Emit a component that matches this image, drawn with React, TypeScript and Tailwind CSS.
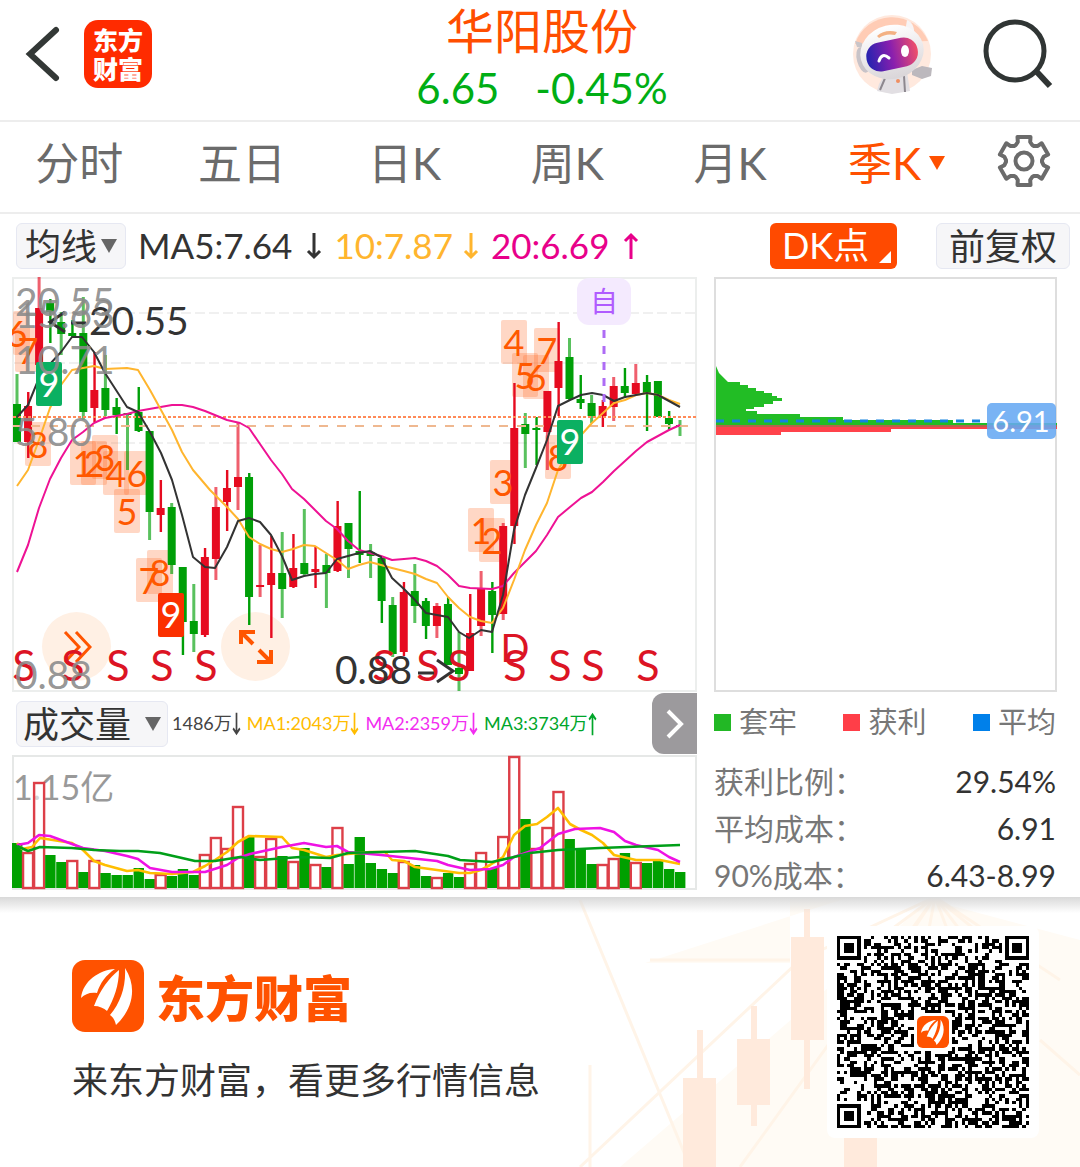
import React from "react";

const LATIN = "font-['Lato','Noto_Sans_CJK_SC',sans-serif]";
const FIRST_X = 17;
const STEP = 11.05;
const xAt = (i: number) => FIRST_X + i * STEP;

type Candle = ["r" | "g", number, number, number, number];

// direction, wick top, wick bottom, body top, body bottom
const CANDLES: Candle[] = [
  ["g", 374, 442, 404, 442], ["r", 392, 458, 406, 442], ["r", 277, 400, 308, 365],
  ["g", 299, 343, 303, 312], ["g", 312, 355, 322, 334], ["g", 320, 338, 333, 336],
  ["g", 297, 420, 333, 412], ["r", 352, 422, 390, 408], ["g", 355, 416, 388, 410],
  ["g", 398, 434, 407, 415], ["g", 413, 470, 413, 415], ["g", 387, 432, 412, 431],
  ["g", 431, 540, 431, 512], ["r", 480, 532, 508, 515], ["g", 503, 574, 507, 565],
  ["g", 567, 655, 567, 622], ["g", 584, 652, 621, 634], ["r", 548, 637, 557, 635],
  ["r", 487, 580, 507, 559], ["r", 470, 531, 488, 502], ["r", 422, 510, 477, 487],
  ["g", 473, 625, 477, 597], ["r", 545, 597, 585, 587], ["r", 536, 638, 573, 585],
  ["g", 532, 618, 573, 589], ["r", 534, 588, 568, 587], ["g", 509, 575, 563, 574],
  ["r", 547, 588, 569, 572], ["g", 554, 608, 565, 573], ["r", 501, 572, 526, 571],
  ["g", 523, 578, 523, 549], ["g", 491, 563, 551, 555], ["g", 544, 578, 552, 556],
  ["g", 558, 623, 558, 601], ["g", 597, 657, 605, 654], ["r", 582, 656, 592, 652],
  ["g", 564, 623, 591, 606], ["g", 598, 639, 601, 626], ["r", 603, 638, 606, 626],
  ["g", 597, 665, 604, 665], ["g", 632, 691, 668, 674], ["r", 594, 671, 633, 671],
  ["r", 571, 636, 588, 626], ["g", 582, 653, 591, 615], ["r", 523, 620, 526, 614],
  ["r", 383, 544, 428, 526], ["g", 413, 468, 424, 434], ["g", 417, 465, 428, 430],
  ["r", 391, 470, 391, 432], ["r", 322, 416, 361, 388], ["g", 338, 400, 357, 399],
  ["g", 375, 409, 399, 403], ["g", 395, 423, 403, 416], ["r", 400, 427, 406, 416],
  ["r", 377, 421, 386, 407], ["g", 368, 398, 386, 393], ["r", 364, 393, 383, 394],
  ["g", 375, 431, 382, 393], ["g", 381, 417, 381, 417], ["g", 411, 430, 418, 424],
  ["g", 420, 436, 425, 427],
];

const VOLUME_TOPS = [
  843, 852, 782, 855, 862, 860, 872, 860, 873, 875, 875, 868, 879, 874, 876, 869, 875, 854, 837, 848, 806,
  837, 856, 838, 856, 861, 848, 864, 867, 827, 864, 837, 863, 869, 873, 861, 865, 876, 877, 873, 877, 863,
  852, 868, 836, 756, 819, 848, 827, 791, 839, 849, 864, 864, 858, 853, 862, 863, 861, 869, 872,
];
const HOLLOW_DOWN = [5, 47];

const MA5 =
  "17,417 28,405 39,378 50,364 61,352 72,337 82,337 94,352 105,373 127,407 138,412 150,432 161,453 172,480 182,515 193,557 205,567 215,568 227,547 238,521 249,518 260,522 271,535 282,556 292,580 304,576 315,574 326,573 337,559 348,556 359,553 370,551 381,557 392,578 404,589 415,600 426,613 437,615 448,617 459,632 469,638 481,630 492,632 503,595 514,530 525,495 536,468 547,440 558,406 570,400 581,395 592,393 603,395 614,401 625,397 636,395 647,393 658,395 669,401 680,407";
const MA10 =
  "17,486 28,470 39,440 50,408 61,385 72,370 94,366 105,369 127,368 138,370 150,390 161,410 172,430 182,452 193,470 210,490 227,507 238,519 249,537 260,544 271,549 282,552 293,549 304,545 315,546 326,553 337,560 348,569 359,565 370,562 381,565 392,568 404,571 415,574 426,579 437,583 448,597 459,608 470,617 481,621 492,623 503,608 514,580 525,550 536,525 547,503 558,470 570,450 583,433 592,423 603,413 614,403 625,400 636,395 647,393 658,395 669,400 680,404";
const MA20 =
  "17,572 28,545 39,508 50,479 61,458 72,440 83,432 94,423 105,418 127,414 138,411 155,408 172,405 182,405 193,407 205,411 227,420 240,423 249,428 260,444 271,460 282,474 292,489 304,499 315,510 326,521 337,529 348,541 359,550 370,553 381,556 392,560 404,559 415,558 426,561 437,566 448,575 459,586 470,588 492,589 503,586 514,573 525,562 536,551 547,535 558,517 570,507 581,498 592,492 603,482 614,471 625,461 636,451 647,442 658,436 669,430 680,425";

const V1 =
  "17,843 22,849 32,847 40,838 72,843 83,850 94,861 105,865 127,871 138,870 150,873 172,874 193,872 205,866 215,860 227,852 238,842 249,836 282,837 292,848 304,850 326,857 337,855 370,852 385,852 392,860 404,861 415,867 437,870 459,873 470,873 481,870 490,865 503,857 514,835 525,826 537,824 547,817 558,808 570,824 581,830 592,835 603,843 614,855 636,860 660,860 680,864";
const V2 =
  "17,845 28,843 39,835 50,836 83,848 105,851 127,856 138,859 150,868 172,872 205,872 227,865 238,858 250,854 282,847 304,843 326,847 337,846 348,852 381,855 400,857 437,861 448,865 470,870 490,869 503,865 514,857 540,848 558,834 575,829 600,828 614,832 625,841 636,845 658,850 669,857 680,862";
const V3 =
  "17,846 28,851 40,847 72,848 94,850 120,851 138,851 160,853 182,858 195,861 215,861 240,857 260,860 300,857 330,858 348,853 380,852 415,851 448,856 460,860 492,862 514,857 530,853 558,850 600,848 680,845";

// label, left, top
const COUNTS: [string, number, number][] = [
  ["6", 4, 311], ["7", 15, 328], ["8", 25, 422], ["1", 70, 441], ["2", 81, 441], ["3", 92, 435],
  ["4", 103, 451], ["6", 124, 451], ["5", 114, 489], ["7", 136, 558], ["8", 147, 550],
  ["1", 468, 508], ["2", 479, 518], ["3", 490, 460], ["4", 501, 320], ["5", 512, 353],
  ["6", 523, 355], ["7", 534, 328], ["8", 545, 435],
];
const NINES: [number, number, string][] = [
  [36, 362, "#0bb062"], [557, 420, "#0bb062"], [158, 593, "#fb3000"],
];
const SIGNALS = [24, 73, 118, 162, 206, 384, 428, 459, 515, 560, 593, 648];

function Logo({ className }: { className: string }) {
  return (
    <svg viewBox="0 0 72 72" className={className} aria-hidden="true">
      <rect width="72" height="72" rx="13" fill="#ff5200" />
      <g fill="#fff">
        <path d="M43 9C27 10 11 21 9 38C13 34 18 32 25 33C28 23 34 15 43 9Z" />
        <path d="M47 10C37 18 28 30 22 46C27 46 32 48 35 51C42 39 47 25 47 10Z" />
        <path d="M53 8C54 26 49 42 38 55C42 58 43 61 44 65C60 50 66 28 53 8Z" />
      </g>
    </svg>
  );
}

function Robot() {
  return (
    <svg viewBox="0 0 80 80" className="size-20" aria-hidden="true">
      <defs>
        <linearGradient id="visor" x1="0" x2="1">
          <stop offset="0" stopColor="#2323b0" />
          <stop offset=".5" stopColor="#8a1fae" />
          <stop offset="1" stopColor="#f0506a" />
        </linearGradient>
        <linearGradient id="shell" x1="0" y1="0" x2="0" y2="1">
          <stop offset="0" stopColor="#ffffff" />
          <stop offset="1" stopColor="#d9d5d8" />
        </linearGradient>
      </defs>
      <circle cx="40" cy="40" r="39" fill="#ffe9de" />
      <path d="M3 30A39 39 0 0 1 76 27" fill="#ffccb5" />
      <path d="M55 6C61 8 64 16 61 26L53 18Z" fill="#f7f4f5" />
      <path d="M33 60L27 70L25 77L40 80L58 77L55 58Z" fill="#e2dfe3" />
      <path d="M34 62L28 76M52 62L53 78" stroke="#8d888f" strokeWidth="2" />
      <circle cx="46" cy="67" r="2" fill="#ef8f62" />
      <path d="M60 56L70 52L80 54L79 62L70 65L60 61Z" fill="#bcb8bd" />
      <ellipse cx="11" cy="46" rx="6" ry="13" fill="#c8c3c8" transform="rotate(-15 11 46)" />
      <path d="M3 27L10 29L11 34L5 33Z" fill="#c9c5c9" />
      <ellipse cx="40" cy="38" rx="32" ry="27" fill="url(#shell)" transform="rotate(-14 40 38)" />
      <path d="M25 22Q33 15 45 18L43 21Q34 19 27 24Z" fill="#f3b183" />
      <rect x="14" y="26" width="52" height="29" rx="14" fill="url(#visor)" transform="rotate(-12 40 40)" />
      <path d="M27 47Q30 38 37 44" stroke="#fff" strokeWidth="3" fill="none" strokeLinecap="round" />
      <ellipse cx="53" cy="37" rx="4" ry="6" fill="#fff" />
    </svg>
  );
}

function Gear() {
  const pts: string[] = [];
  for (let k = 0; k < 6; k++) {
    const spots: [number, number][] = [[-27, 18], [-18, 20], [-15, 25], [15, 25], [18, 20], [27, 18]];
    for (const [da, r] of spots) {
      const a = ((-90 + k * 60 + da) * Math.PI) / 180;
      pts.push(`${(30 + r * Math.cos(a)).toFixed(1)},${(30 + r * Math.sin(a)).toFixed(1)}`);
    }
  }
  return (
    <svg viewBox="0 0 60 60" className="size-[60px]" fill="none" stroke="#6b6b6b" strokeWidth="4" strokeLinejoin="round" aria-hidden="true">
      <polygon points={pts.join(" ")} />
      <circle cx="30" cy="30" r="8.5" />
    </svg>
  );
}

function Arrow({ up, small }: { up?: boolean; small?: boolean }) {
  return (
    <svg viewBox="0 0 16 28" className={small ? "h-6 w-[9px] shrink-0" : "h-7 w-4 shrink-0"} preserveAspectRatio="none" fill="none" stroke="currentColor" strokeWidth="3" aria-label={up ? "上升" : "下降"}>
      <path d={up ? "M8 27V3M2 9L8 3L14 9" : "M8 1V25M2 19L8 25L14 19"} />
    </svg>
  );
}

function Caret({ className }: { className: string }) {
  return (
    <svg viewBox="0 0 16 14" className={className} fill="currentColor" aria-hidden="true">
      <path d="M0 0H16L8 14Z" />
    </svg>
  );
}

function Header() {
  return (
    <header className="grid h-[122px] grid-cols-[1fr_auto_1fr] items-center border-b-2 border-[#ededed]">
      <div className="flex items-center gap-4 pb-3 pl-6">
        <button type="button" aria-label="返回" className="w-11">
          <svg viewBox="0 0 44 60" className="h-[60px] w-11" fill="none" stroke="#333836" strokeWidth="6" strokeLinecap="round" aria-hidden="true">
            <path d="M32 6L6 30L32 54" />
          </svg>
        </button>
        <a href="#home" className="grid size-[68px] place-content-center rounded-[14px] bg-[#ff2b00] text-center font-['Noto_Sans_CJK_SC',sans-serif] text-[25px] leading-[29px] font-black text-white">
          <span>东方</span>
          <span>财富</span>
        </a>
      </div>
      <div className="self-start pl-1 text-center">
        <h1 className="font-['Noto_Sans_CJK_SC',sans-serif] text-[48px] leading-[56px] text-[#ff4e00]">华阳股份</h1>
        <p className="flex justify-center gap-9 text-[42px] leading-[64px] text-[#00ae14]">
          <span>6.65</span>
          <span>-0.45%</span>
        </p>
      </div>
      <div className="flex items-center justify-end gap-12 pr-6 pb-3">
        <button type="button" aria-label="智能助手"><Robot /></button>
        <button type="button" aria-label="搜索">
          <svg viewBox="0 0 76 76" className="size-[76px]" fill="none" stroke="#303534" strokeWidth="5" aria-hidden="true">
            <circle cx="35" cy="35" r="29" />
            <path d="M56 55L70 70" strokeWidth="6" />
          </svg>
        </button>
      </div>
    </header>
  );
}

function Tabs() {
  return (
    <nav className="flex h-[92px] items-center border-b-2 border-[#ededed] text-[44px] text-[#6b6b6b]">
      {["分时", "五日", "日K", "周K", "月K"].map((t) => (
        <button type="button" key={t} className="flex-1 pr-1 pb-2 leading-[60px]">{t}</button>
      ))}
      <button type="button" className="flex flex-1 items-center justify-center gap-2 pb-2 pl-1 leading-[60px] text-[#ff5000]">
        季K<Caret className="h-3.5 w-4" />
      </button>
      <button type="button" aria-label="设置" className="grid w-26 place-content-center pr-2 pb-3"><Gear /></button>
    </nav>
  );
}

function PriceChart() {
  return (
    <div className="relative">
      <button type="button" aria-label="展开" className="absolute bottom-[11px] left-[30px] grid size-[69px] place-content-center rounded-full bg-[#fff0e4]">
        <svg viewBox="0 0 30 34" className="h-[34px] w-[30px]" fill="none" stroke="#ff5500" strokeWidth="3" aria-hidden="true">
          <path d="M3 2L17 17L3 32M14 2L28 17L14 32" />
        </svg>
      </button>
      <button type="button" aria-label="全屏" className="absolute bottom-[11px] left-[209px] grid size-[69px] place-content-center rounded-full bg-[#fff0e4]">
        <svg viewBox="0 0 36 36" className="size-9" fill="none" stroke="#ff5500" strokeWidth="4" aria-hidden="true">
          <path d="M3 15V3H17M3 3L15 15M33 21V33H19M33 33L21 21" />
        </svg>
      </button>
      <svg viewBox="12 277 685 415" className="pointer-events-none relative block w-full" role="img" aria-label="季K线图">
        <rect x="13" y="278" width="683" height="413" fill="none" stroke="#eceeed" strokeWidth="2" />
        {[313, 363, 443].map((y) => (
          <path key={y} d={`M13 ${y}H696`} stroke="#f0f0f0" strokeWidth="2" strokeDasharray="10 4" />
        ))}
        {COUNTS.map(([, x, y], i) => (
          <rect key={i} x={Math.max(x, 13)} y={y} width={x < 13 ? 17 : 26} height="44" rx="2" fill="#ff6a28" fillOpacity=".27" />
        ))}
        {CANDLES.map(([d, wt, wb, bt, bb], i) => {
          const c = d === "r" ? "#e60b20" : "#009f08";
          const soft = i % 2 === 0;
          return (
            <g key={i} fill={c}>
              <rect x={xAt(i) - (soft ? 1.5 : 1)} y={wt} width={soft ? 3 : 2.4} height={wb - wt} fillOpacity={soft ? 0.65 : 1} />
              <rect x={xAt(i) - 4} y={bt} width="8" height={bb - bt} />
            </g>
          );
        })}
        <path d="M13 417H696" stroke="#ff8a58" strokeWidth="2" strokeDasharray="3 2" />
        <path d="M13 426H696" stroke="#efb890" strokeWidth="2" strokeDasharray="9 9" />
        <g fill="none" strokeWidth="2" strokeLinejoin="round">
          <polyline points={MA20} stroke="#ee1294" />
          <polyline points={MA10} stroke="#ffb52e" />
          <polyline points={MA5} stroke="#333" />
        </g>
        <path d="M604 330V404" stroke="#ae6cf5" strokeWidth="3" strokeDasharray="8 8" />
        <rect x="577" y="278" width="54" height="47" rx="12" fill="#f4eafe" />
        <text x="604" y="312" textAnchor="middle" fontSize="28" fill="#b05cff" fontFamily="'Noto Sans CJK SC', sans-serif">自</text>
        <g fontFamily="Lato, sans-serif">
          <g fontSize="36" fill="#ff5800" textAnchor="middle">
            {COUNTS.map(([t, x, y], i) => (
              <text key={i} x={x + 13} y={y + 36}>{t}</text>
            ))}
          </g>
          {NINES.map(([x, y, c]) => (
            <g key={x}>
              <rect x={x} y={y} width="26" height="44" rx="2" fill={c} />
              <text x={x + 13} y={y + 35} textAnchor="middle" fontSize="36" fill="#fff">9</text>
            </g>
          ))}
          <g fontSize="43" fill="#dc1424" textAnchor="middle">
            {SIGNALS.map((x) => (
              <text key={x} x={x} y="681">S</text>
            ))}
            <text x="515" y="662" fontSize="38">D</text>
          </g>
          <g fontSize="39" fill="#333">
            <text x="89" y="335">20.55</text>
            <text x="335" y="684">0.88</text>
          </g>
          <path d="M65 312L50 322L65 332M71 323H86" fill="none" stroke="#333" strokeWidth="3" />
          <path d="M418 673H434M437 660L453 671L437 682" fill="none" stroke="#333" strokeWidth="3" />
          <g fontSize="39" fill="#8a8a8a" fillOpacity=".9">
            <text x="15" y="316">20.55</text>
            <text x="15" y="328">15.63</text>
            <text x="15" y="374">10.71</text>
            <text x="15" y="446">5.80</text>
            <text x="15" y="689">0.88</text>
          </g>
        </g>
      </svg>
    </div>
  );
}

function VolumeChart() {
  return (
    <svg viewBox="12 755 685 135" className="block w-full" role="img" aria-label="成交量图">
      <path d="M13 889V756H696V889Z" fill="none" stroke="#e6e8e7" strokeWidth="2" />
      <text x="13" y="800" fontSize="34" fill="#999" fontFamily="Lato, 'Noto Sans CJK SC', sans-serif">1.15亿</text>
      {VOLUME_TOPS.map((t, i) => {
        const hollow = CANDLES[i][0] === "r" || HOLLOW_DOWN.includes(i);
        return hollow ? (
          <rect key={i} x={xAt(i) - 5} y={t + 1} width="10" height={887 - t} fill="#fff" fillOpacity=".6" stroke="#dd3f48" strokeWidth="2.4" />
        ) : (
          <rect key={i} x={xAt(i) - 5} y={t} width="10.4" height={888 - t} fill="#00a000" />
        );
      })}
      <g fill="none" strokeWidth="2.6" strokeLinejoin="round">
        <polyline points={V1} stroke="#ffbe00" />
        <polyline points={V2} stroke="#ef12e4" />
        <polyline points={V3} stroke="#009f18" />
      </g>
    </svg>
  );
}

function VolumeBar() {
  const items: [string, string, boolean][] = [
    ["1486万", "text-[#444]", false],
    ["MA1:2043万", "text-[#ffbc00]", false],
    ["MA2:2359万", "text-[#f22df0]", false],
    ["MA3:3734万", "text-[#00a62a]", true],
  ];
  return (
    <div className="flex h-[63px] items-center gap-1">
      <button type="button" aria-haspopup="menu" className="ml-1 flex h-[46px] shrink-0 items-center gap-3.5 rounded-md border border-[#e6e8f2] bg-[#f6f6f8] px-1.5 text-[36px] leading-[44px] text-[#333]">
        成交量<Caret className="h-3.5 w-4 text-[#666]" />
      </button>
      <div className="flex min-w-0 flex-1 items-center gap-1.5 text-[18px] whitespace-nowrap">
        {items.map(([t, c, up]) => (
          <span key={t} className={`flex items-center ${c}`}>{t}<Arrow small up={up} /></span>
        ))}
      </div>
      <button type="button" aria-label="下一个指标" className="grid h-[61px] w-[45px] shrink-0 place-content-center rounded-l-xl bg-[#9c9a9d]">
        <svg viewBox="0 0 18 30" className="h-[30px] w-[18px]" fill="none" stroke="#fff" strokeWidth="4" aria-hidden="true">
          <path d="M2 2L15 15L2 28" />
        </svg>
      </button>
    </div>
  );
}

function ChipChart() {
  return (
    <svg viewBox="714 277 344 415" className="block w-full" role="img" aria-label="筹码分布">
      <rect x="715" y="278" width="341" height="413" fill="none" stroke="#dedede" strokeWidth="2" />
      <path fill="#22bd25" d="M716 366L719 373L728 382H740V385H748V388H756V391H764V393H772V396H777V398H782V401H773V404H764V407H754V409H746V411H757V414H800V417H843V420H953V423H1057V426H716Z" />
      <path fill="#ff434b" d="M716 427H1057V429H891V432H781V435H716Z" />
      <path d="M716 426H1057" stroke="#b5654a" strokeWidth="2" />
      <path d="M716 421H986" stroke="#1583e0" strokeWidth="3" strokeDasharray="8 8" />
      <rect x="987" y="403" width="69" height="36" rx="5" fill="#66a9f3" fillOpacity=".88" />
      <text x="1021" y="432" textAnchor="middle" fontSize="29" fill="#fff" fontFamily="Lato, sans-serif">6.91</text>
    </svg>
  );
}

function ChipPanel() {
  const legend: [string, string][] = [
    ["套牢", "bg-[#22b825]"],
    ["获利", "bg-[#ff3e48]"],
    ["平均", "bg-[#0080ea]"],
  ];
  const rows: [string, string][] = [
    ["获利比例：", "29.54%"],
    ["平均成本：", "6.91"],
    ["90%成本：", "6.43-8.99"],
  ];
  return (
    <section className="min-w-0">
      <ChipChart />
      <ul className="flex h-[60px] items-center justify-between pr-0.5 text-[29px] text-[#777]">
        {legend.map(([t, c]) => (
          <li key={t} className="flex items-center gap-2"><span className={`size-[17px] ${c}`} />{t}</li>
        ))}
      </ul>
      <dl className="flex flex-col gap-2 pt-2.5 pr-0.5 text-[30px] leading-[39px]">
        {rows.map(([k, v]) => (
          <div key={k} className="flex justify-between">
            <dt className="text-[#777]">{k}</dt>
            <dd className="text-[#333]">{v}</dd>
          </div>
        ))}
      </dl>
    </section>
  );
}

function Toolbar() {
  return (
    <div className="flex h-[63px] items-center pr-2.5 pl-4 text-[36px] whitespace-nowrap">
      <button type="button" aria-haspopup="menu" className="flex h-[46px] items-center gap-1 rounded-md border border-[#e6e8f2] bg-[#f6f6f8] px-2 leading-[44px] text-[#333]">
        均线<Caret className="h-3.5 w-4 text-[#666]" />
      </button>
      <div className="ml-3 flex items-center gap-3 text-[35px]">
        <span className="flex items-center gap-3.5 text-[#333]">MA5:7.64<Arrow /></span>
        <span className="flex items-center gap-2.5 text-[#ffb52e]">10:7.87<Arrow /></span>
        <span className="flex items-center gap-3.5 text-[#e8008a]">20:6.69<Arrow up /></span>
      </div>
      <button type="button" className="ml-auto flex h-[46px] w-[127px] items-end justify-between rounded-md bg-[#ff4a00] pr-1.5 pb-1.5 pl-3 text-white">
        <span className="leading-[36px]">DK点</span>
        <svg viewBox="0 0 12 12" className="size-3" fill="#fff" aria-hidden="true"><path d="M12 0V12H0Z" /></svg>
      </button>
      <button type="button" className="ml-[39px] h-[46px] rounded-md border border-[#e6e8f2] bg-[#f6f6f8] px-3 leading-[44px] text-[#333]">前复权</button>
    </div>
  );
}

const QR_N = 57;
function qrPath() {
  let seed = 20477;
  let d = "";
  const corners = [[0, 0], [QR_N - 7, 0], [0, QR_N - 7]];
  for (let y = 0; y < QR_N; y++) {
    for (let x = 0; x < QR_N; x++) {
      seed ^= seed << 13;
      seed ^= seed >>> 17;
      seed ^= seed << 5;
      let on = ((seed >>> 9) & 255) < 130;
      for (const [cx, cy] of corners) {
        const r = Math.max(Math.abs(x - cx - 3), Math.abs(y - cy - 3));
        if (r <= 4) on = r === 3 || r <= 1;
      }
      if (Math.abs(x - 28) < 6 && Math.abs(y - 28) < 6) on = false;
      if (on) d += `M${x} ${y}h1v1h-1z`;
    }
  }
  return d;
}
const QR = qrPath();

function Footer() {
  return (
    <footer className="relative flex min-h-[270px] items-center justify-between overflow-hidden bg-white pr-[41px] pl-[72px]">
      <svg viewBox="560 897 520 270" className="absolute right-0 bottom-0 h-full" aria-hidden="true">
        <g fill="#fffbf5">
          <path d="M645 963H790V897H850Z" />
          <path d="M620 1167L930 900L1080 940V1167Z" />
        </g>
        <g stroke="#fff4e8" strokeWidth="3" fill="none">
          <path d="M580 900L690 1167M580 1167L800 960L935 897L740 1167M935 897L850 960M935 897L900 950M935 897L925 950M935 897L955 950M935 897L975 950M935 897L1000 950M935 897L1060 980M1040 1040L1080 1075M650 960H790M590 1065V1167" />
        </g>
        <g fill="#ffeadc">
          <rect x="683" y="1078" width="33" height="89" /><rect x="697" y="1030" width="6" height="137" />
          <rect x="737" y="1039" width="33" height="66" /><rect x="751" y="1006" width="6" height="120" />
          <rect x="791" y="937" width="33" height="103" /><rect x="804" y="909" width="6" height="180" />
          <rect x="844" y="1128" width="33" height="39" />
        </g>
      </svg>
      <div className="absolute inset-x-0 top-0 h-4 bg-linear-to-b from-[#d9d9d9] to-transparent" />
      <div className="relative pt-1">
        <div className="flex items-center gap-3">
          <Logo className="size-[72px]" />
          <span className="font-['Noto_Sans_CJK_SC',sans-serif] text-[49px] leading-[72px] font-black text-[#ff5200]">东方财富</span>
        </div>
        <p className="mt-5 text-[36px] leading-[56px] text-[#333]">来东方财富，看更多行情信息</p>
      </div>
      <div className="relative grid size-[212px] place-content-center rounded-lg bg-white">
        <svg viewBox="0 0 57 57" className="size-48" role="img" aria-label="二维码" shapeRendering="crispEdges">
          <path d={QR} fill="#000" />
        </svg>
        <Logo className="absolute top-[90px] left-[90px] size-8" />
      </div>
    </footer>
  );
}

export default function App() {
  return (
    <div className={`w-full bg-white ${LATIN}`}>
      <Header />
      <Tabs />
      <Toolbar />
      <main className="grid grid-cols-[685fr_344fr] gap-[17px] pr-[22px] pb-0.5 pl-3">
        <section className="min-w-0">
          <PriceChart />
          <VolumeBar />
          <VolumeChart />
        </section>
        <ChipPanel />
      </main>
      <Footer />
    </div>
  );
}
